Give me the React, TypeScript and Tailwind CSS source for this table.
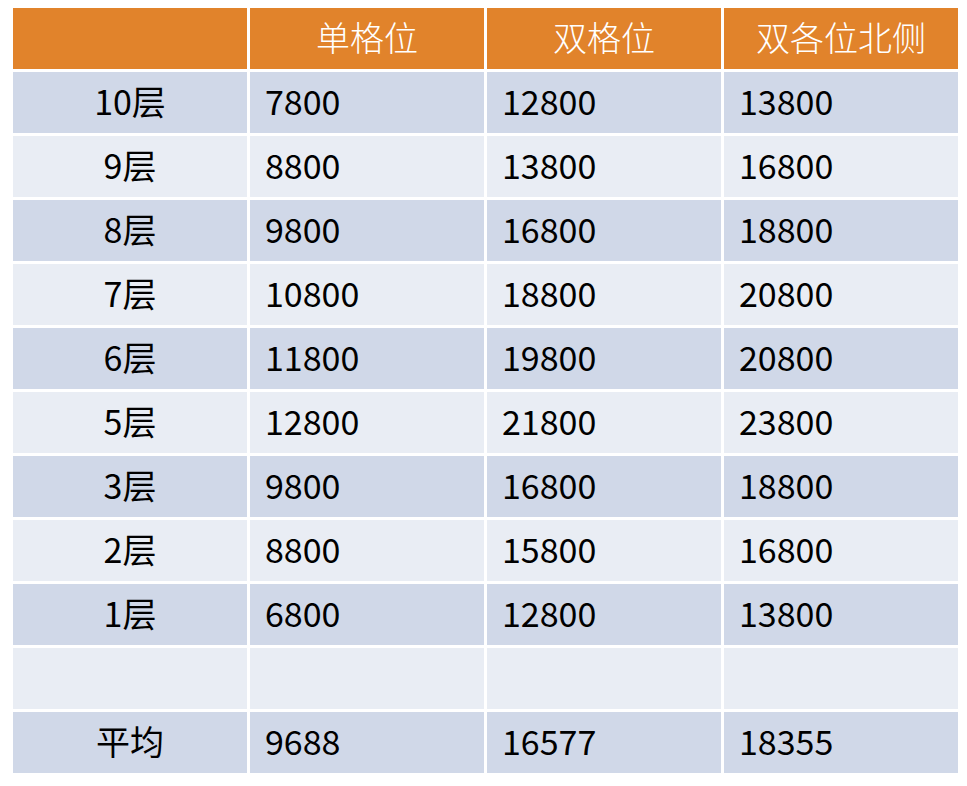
import React from "react";

const headers = ["", "单格位", "双格位", "双各位北侧"];

const rows: string[][] = [
  ["10层", "7800", "12800", "13800"],
  ["9层", "8800", "13800", "16800"],
  ["8层", "9800", "16800", "18800"],
  ["7层", "10800", "18800", "20800"],
  ["6层", "11800", "19800", "20800"],
  ["5层", "12800", "21800", "23800"],
  ["3层", "9800", "16800", "18800"],
  ["2层", "8800", "15800", "16800"],
  ["1层", "6800", "12800", "13800"],
  ["", "", "", ""],
  ["平均", "9688", "16577", "18355"],
];

export default function App() {
  return (
    <div
      className="w-[967px] h-[786px] bg-white pt-[8px] pl-[13px]"
      style={{ fontFamily: '"Noto Sans CJK SC", "Noto Sans", sans-serif' }}
    >
      <div className="grid grid-cols-[234px_234px_234px_234px] gap-[3px] w-[945px]">
        {headers.map((h, i) => (
          <div
            key={`h${i}`}
            className="h-[61px] bg-[#e1832b] text-white text-[34px] font-light flex items-center justify-center leading-none pb-[3px]"
          >
            {h}
          </div>
        ))}
        {rows.map((row, r) =>
          row.map((cell, c) => (
            <div
              key={`${r}-${c}`}
              className={`h-[61px] flex items-center text-[34px] text-black leading-none pb-[3px] ${
                r % 2 === 0 ? "bg-[#d0d8e8]" : "bg-[#e9edf4]"
              } ${c === 0 ? "justify-center" : "pl-[15px]"}`}
            >
              {cell}
            </div>
          ))
        )}
      </div>
    </div>
  );
}
